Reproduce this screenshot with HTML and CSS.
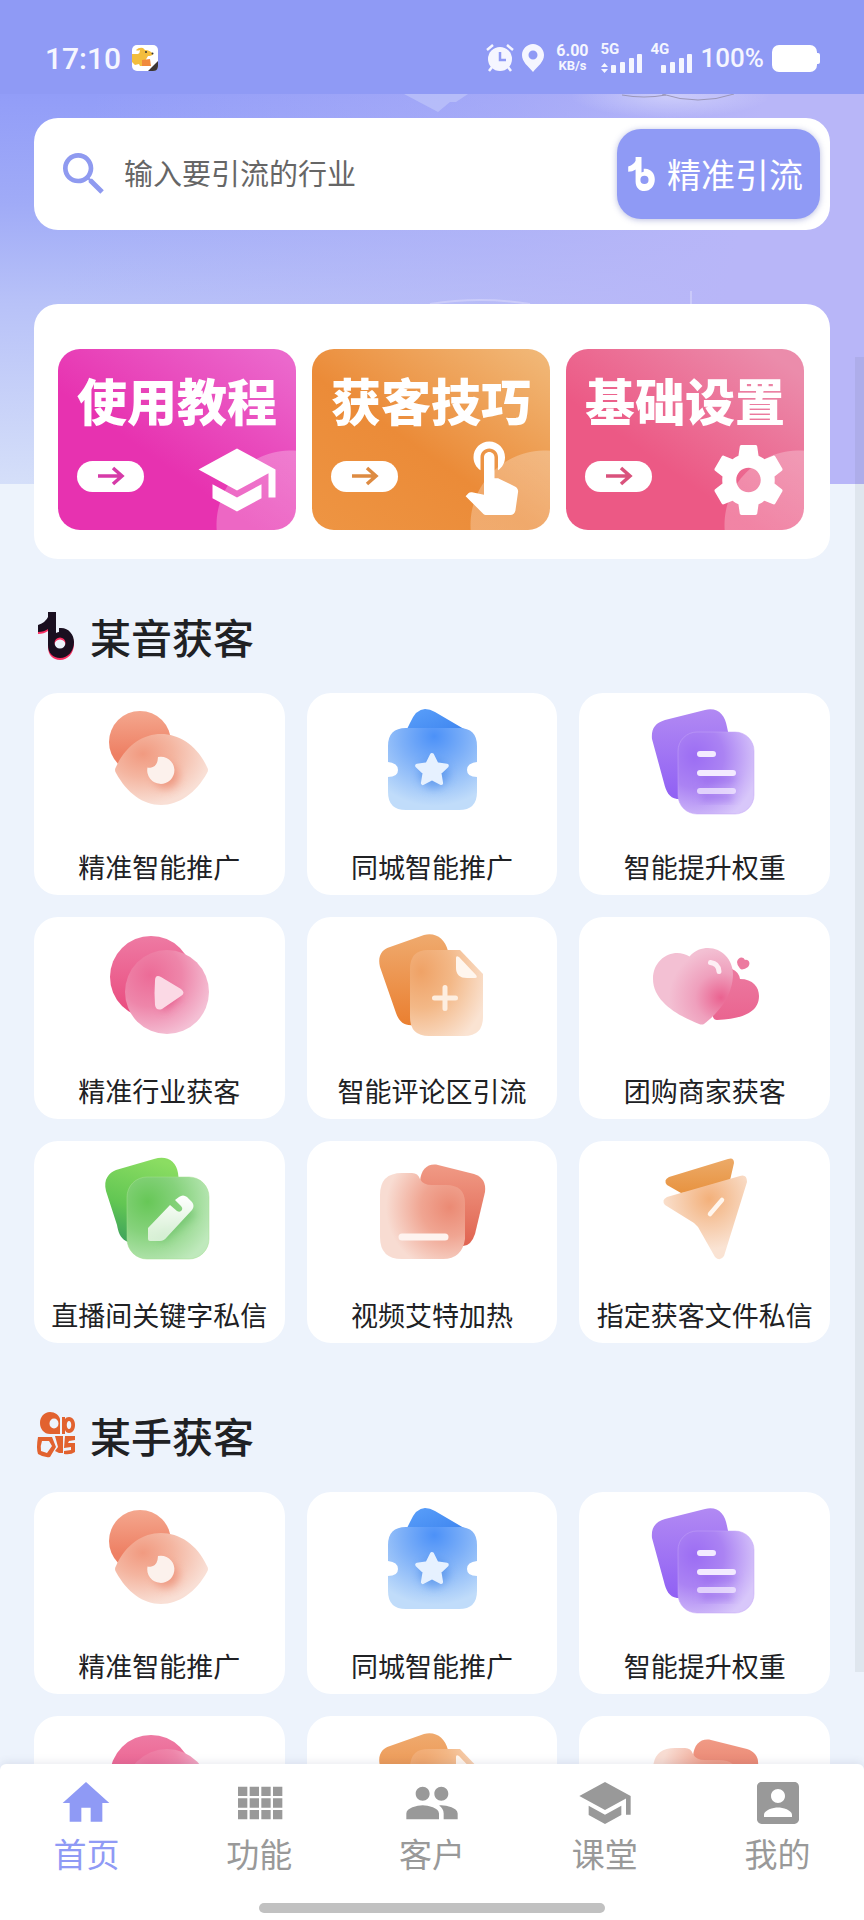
FILE: index.html
```html
<!DOCTYPE html>
<html lang="zh-CN">
<head>
<meta charset="utf-8">
<meta name="viewport" content="width=device-width, initial-scale=1">
<title>首页</title>
<link rel="stylesheet" href="styles.css">
</head>
<body>
<svg class="sprite" aria-hidden="true">
  <defs>
    <linearGradient id="coralBack" x1="0" y1="0" x2="0" y2="1"><stop offset="0" stop-color="#f4a78e"/><stop offset=".7" stop-color="#ee8064"/></linearGradient>
    <radialGradient id="coralFront" cx=".3" cy=".28" r=".72"><stop offset="0" stop-color="#f19a80"/><stop offset=".45" stop-color="#f4b5a0"/><stop offset="1" stop-color="#f9dfd5"/></radialGradient>
    <linearGradient id="blueBack" x1="0" y1="0" x2="1" y2="1"><stop offset="0" stop-color="#5ba0fa"/><stop offset="1" stop-color="#3b82ee"/></linearGradient>
    <radialGradient id="blueFront" cx=".52" cy=".1" r=".85"><stop offset="0" stop-color="#4c91f8"/><stop offset=".45" stop-color="#7fb1f8"/><stop offset="1" stop-color="#c0dcfa"/></radialGradient>
    <linearGradient id="purpleBack" x1="0" y1="0" x2="0" y2="1"><stop offset="0" stop-color="#b189f3"/><stop offset="1" stop-color="#9060f4"/></linearGradient>
    <radialGradient id="purpleFront" cx=".22" cy=".3" r=".85"><stop offset="0" stop-color="#9c6df3"/><stop offset=".45" stop-color="#ab83f3"/><stop offset="1" stop-color="#d8c7fa"/></radialGradient>
    <linearGradient id="pinkBack" x1="0" y1="0" x2="0" y2="1"><stop offset="0" stop-color="#ee7aa3"/><stop offset="1" stop-color="#e9487c"/></linearGradient>
    <linearGradient id="heartBack" x1="0" y1="0" x2="0" y2="1"><stop offset="0" stop-color="#ec7aa0"/><stop offset="1" stop-color="#ea6490"/></linearGradient>
    <radialGradient id="pinkFront" cx=".3" cy=".3" r=".75"><stop offset="0" stop-color="#ec6b97"/><stop offset=".5" stop-color="#ee86aa"/><stop offset="1" stop-color="#f4bfd4"/></radialGradient>
    <linearGradient id="orangeBack" x1="0" y1="0" x2="0" y2="1"><stop offset="0" stop-color="#efaa6e"/><stop offset="1" stop-color="#ea7f30"/></linearGradient>
    <linearGradient id="planeBack" x1="0" y1="0" x2="0" y2="1"><stop offset="0" stop-color="#ecaa68"/><stop offset="1" stop-color="#e89340"/></linearGradient>
    <radialGradient id="orangeFront" cx=".15" cy=".25" r=".95"><stop offset="0" stop-color="#efa266"/><stop offset=".45" stop-color="#f3b887"/><stop offset="1" stop-color="#fae3d2"/></radialGradient>
    <linearGradient id="greenBack" x1=".6" y1="0" x2=".3" y2="1"><stop offset="0" stop-color="#8bdd62"/><stop offset=".6" stop-color="#62c653"/><stop offset="1" stop-color="#3ea35c"/></linearGradient>
    <radialGradient id="greenFront" cx=".25" cy=".3" r=".85"><stop offset="0" stop-color="#67c757"/><stop offset=".45" stop-color="#86d27c"/><stop offset="1" stop-color="#bfe9bc"/></radialGradient>
    <linearGradient id="redBack" x1="0" y1="0" x2="0" y2="1"><stop offset="0" stop-color="#f09a85"/><stop offset="1" stop-color="#e06350"/></linearGradient>
    <radialGradient id="redFront" cx=".82" cy=".4" r=".75"><stop offset="0" stop-color="#eb8a74"/><stop offset=".45" stop-color="#f0a592"/><stop offset="1" stop-color="#f8dcd2"/></radialGradient>
    <radialGradient id="heartFront" cx=".85" cy=".65" r=".65"><stop offset="0" stop-color="#ea6290"/><stop offset=".5" stop-color="#efa0bd"/><stop offset="1" stop-color="#f3c0d3"/></radialGradient>
    <radialGradient id="planeFront" cx=".55" cy=".28" r=".6"><stop offset="0" stop-color="#f3b07a"/><stop offset=".5" stop-color="#f6caa8"/><stop offset="1" stop-color="#fae3d3"/></radialGradient>
    <linearGradient id="gloss" x1="0" y1="0" x2="0" y2="1"><stop offset="0" stop-color="#fff"/><stop offset="1" stop-color="#fff" stop-opacity=".65"/></linearGradient>
    <filter id="soft" x="-40%" y="-40%" width="180%" height="180%"><feGaussianBlur stdDeviation="4"/></filter>
  </defs>

  <symbol id="i-eye" viewBox="0 0 120 120">
    <circle cx="41" cy="41" r="31" fill="url(#coralBack)"/>
    <path d="M17 66C27 44 44 33 62 33s36 11 46 33q2 3 0 6c-11 20-28 32-46 32S28 92 17 72q-2-3 0-6z" fill="url(#coralFront)"/>
    <circle cx="67" cy="75" r="13" fill="#ea7f63" opacity=".6" filter="url(#soft)"/>
    <path d="M59 56a13.600 13.600 0 1 1-10.500 10.500q1.500.5 3 .2Q57 66 58.500 60q.3-2 .5-4z" fill="#fcf1ec"/>
  </symbol>
  <symbol id="i-ticket" viewBox="0 0 120 120">
    <path d="M33 32l5-10Q44 8 53 8q5 0 10 3l29 17v8z" fill="url(#blueBack)"/>
    <path d="M34 27h53q18 0 18 18v16q-10 1-10 8t10 7v15q0 18-18 18H34q-18 0-18-18V76q10 0 10-7t-10-8V45q0-18 18-18z" fill="url(#blueFront)"/>
    <circle cx="62" cy="73" r="15" fill="#3f83e6" opacity=".5" filter="url(#soft)"/>
    <path d="M60 54l4.600 9.200 10.200 1.500-7.400 7.200 1.700 10.200-9.100-4.800-9.100 4.800 1.700-10.200-7.400-7.200 10.200-1.500z" fill="#e6f1ff" stroke="#e6f1ff" stroke-width="4" stroke-linejoin="round"/>
  </symbol>
  <symbol id="i-list" viewBox="0 0 120 120">
    <path d="M7 38c-1-10 3-16 13-19L60 9c13-3 20 5 22 17l3 14-46 58h-7c-8-1-11-8-13-16z" fill="url(#purpleBack)"/>
    <rect x="33" y="31" width="76" height="82" rx="19" fill="url(#purpleFront)" stroke="#c3a3f8" stroke-opacity=".5"/>
    <path d="M56 78h34M56 96h32" stroke="#8d5ce8" stroke-width="8" opacity=".5" filter="url(#soft)"/>
    <g fill="none" stroke="#f3ebff" stroke-width="6" stroke-linecap="round"><path d="M55 53h13M55 72h33"/><path d="M55 90h33" opacity=".75"/></g>
  </symbol>
  <symbol id="i-play" viewBox="0 0 120 120">
    <circle cx="52" cy="52" r="41" fill="url(#pinkBack)"/>
    <circle cx="68" cy="67" r="42" fill="url(#pinkFront)"/>
    <path d="M60 62l24 8-20 18z" fill="#e2447b" opacity=".6" filter="url(#soft)"/>
    <path d="M56 56q0-7 6-4l20 12q5 4 0 7L63 84q-6 2-7-4-1-12 0-24z" fill="#fbd9e5"/>
  </symbol>
  <symbol id="i-doc" viewBox="0 0 120 120">
    <path d="M8 42C5 30 11 24 18 22l34-12c12-3 21 4 24 16l2 30-36 44c-11 1-15-4-18-12z" fill="url(#orangeBack)"/>
    <path d="M56 25h32l23 24v43q0 19-19 19H57q-19 0-19-19V44q0-19 18-19z" fill="url(#orangeFront)"/>
    <path d="M84 33q0-3 3-1l17 18q2 3-1 3h-8q-11 0-11-10z" fill="#fff6ee"/>
    <path d="M64 79h22" stroke="#ea8a42" stroke-width="12" opacity=".6" filter="url(#soft)"/>
    <path d="M73 62.500v21M62.500 73h21" stroke="#fdeee0" stroke-width="5" stroke-linecap="round"/>
  </symbol>
  <symbol id="i-hearts" viewBox="0 0 120 120">
    <path d="M87 44q7 3 8 10c13 0 19 8 19 17 0 17-18 23-42 24q-3 0-4-3L60 60z" fill="url(#heartBack)"/>
    <path d="M44.500 31.500C50 25 57 23 63 23c14 0 25 12 25 26 0 23-17 41-29 50q-2 1-5 0C34 91 8 77 8 54c0-22 22-32 36.500-22.500z" fill="url(#heartFront)"/>
    <path d="M65.500 37.500q8 1 8.500 9" fill="none" stroke="#fdeef4" stroke-width="5" stroke-linecap="round"/>
    <path d="M92 37c1-5 6-6 8-2 4-1 6 4 3 7q-3 2-6 2.500-1 0-2-1-3-3-3-6.500z" fill="#ec7a9f"/>
  </symbol>
  <symbol id="i-pencil" viewBox="0 0 120 120">
    <path d="M7 42C4 30 10 24 17 21l38-11c13-4 22 2 24 14l3 26-46 44q-6 0-9-2c-6-3-8-10-9-16z" fill="url(#greenBack)"/>
    <rect x="28" y="28" width="82" height="82" rx="20" fill="url(#greenFront)" stroke="#a5e092" stroke-opacity=".5"/>
    <path d="M60 90l34-28" stroke="#52b254" stroke-width="10" opacity=".45" filter="url(#soft)"/>
    <path d="M49 79l22-23 7 6q3 2 5-1 1-2-1-4l-6-6 4-3q4-3 8 0l5 5q3 4 0 8L68 88q-3 4-7 4H51q-2 0-2-2z" fill="url(#gloss)"/>
  </symbol>
  <symbol id="i-folder" viewBox="0 0 120 120">
    <path d="M48 32C49 20 56 14 66 16l36 9c9 3 12 9 11 18l-10 42q-4 12-12 12L56 60z" fill="url(#redBack)"/>
    <path d="M30 24h10q6 0 8 6 3 6 12 6h14q19 0 19 18v36q-3 20-22 20H30Q8 110 8 88V46q0-22 22-22z" fill="url(#redFront)"/>
    <path d="M32 94h44" stroke="#e5705b" stroke-width="8" opacity=".55" filter="url(#soft)"/>
    <path d="M30 88h43" stroke="#fef3ef" stroke-width="7" stroke-linecap="round"/>
  </symbol>
  <symbol id="i-plane" viewBox="0 0 120 120">
    <path d="M24 28L83 10q6-2 6 4l-6 26-47 4-14-8q-4-5 2-8z" fill="url(#planeBack)"/>
    <path d="M22 48l73-21q7-2 7 6L79 107q-4 6-9 1L53 78Q51 76 49 74L20 56q-4-5 2-8z" fill="url(#planeFront)"/>
    <path d="M77 51L65 65" stroke="#fff6ee" stroke-width="4.500" stroke-linecap="round"/>
  </symbol>
  <symbol id="i-note" viewBox="0 0 36 46">
    <path fill-rule="evenodd" d="M10 0h8v21q2-1 3-1v-4h2c8 0 13 7 13 14 0 9-6 16-14 16-7 0-12-5-12-13V17q-4 3-10 3v-7q8-3 10-8zm12 25.500a5.500 5.500 0 1 0 0 11 5.500 5.500 0 0 0 0-11z"/>
  </symbol>
  <symbol id="i-school" viewBox="0 0 24 24"><path d="M5 13.180v4L12 21l7-3.820v-4L12 17l-7-3.820zM12 3L1 9l11 6 9-4.910V17h2V9L12 3z"/></symbol>
  <symbol id="i-arrow" viewBox="0 0 28 20"><path d="M1 10h23M16 2l9 8-9 8" fill="none" stroke="currentColor" stroke-width="3.500"/></symbol>
</svg>

<div class="app">
  <header class="status">
    <div class="status-group">
      <span class="clock">17:10</span>
      <svg class="ic-dog" viewBox="0 0 26 26" aria-hidden="true">
        <rect width="26" height="26" rx="5" fill="#fff"/>
        <path d="M0 9h6q2-1 2-4-3 1-4 0 3-3 7-2l2 2q5 0 8 4-1 2-5 2l-3 5 2 5H8l-1-2-4 1-3-3z" fill="#f3bd3d"/>
        <circle cx="14" cy="7" r="1" fill="#333"/><circle cx="20.500" cy="8.500" r="1" fill="#333"/>
        <path d="M10 15l8-1 1 7h-9z" fill="#f08a3c"/>
        <path d="M26 16L16 26h5q5 0 5-5z" fill="#3c3533"/>
      </svg>
    </div>
    <div class="status-group status-right">
      <svg class="ic-alarm" viewBox="0 0 28 28" aria-hidden="true"><circle cx="14" cy="15" r="12"/><path d="M1 6l6-5M27 6l-6-5M6 23l-3 4M22 23l3 4" stroke="#f5f6ff" stroke-width="2.500"/><path d="M14 8v8h6" fill="none" stroke="#8f9af5" stroke-width="2.500"/></svg>
      <svg class="ic-pin" viewBox="0 0 22 28" aria-hidden="true"><path fill-rule="evenodd" d="M11 0c6 0 11 5 11 11 0 7-6 11-11 17C6 22 0 18 0 11 0 5 5 0 11 0zm0 6.500a4.500 4.500 0 1 0 0 9 4.500 4.500 0 0 0 0-9z"/></svg>
      <span class="speed"><span>6.00</span><small>KB/s</small></span>
      <span class="signal"><span>5G</span>
        <svg viewBox="0 0 42 19" aria-hidden="true"><path d="M0 13l3.500-4 3.500 4zM0 15l3.500 4 3.500-4z"/><rect x="10" y="11" width="5" height="8" rx="1"/><rect x="19" y="8" width="5" height="11" rx="1"/><rect x="28" y="4" width="5" height="15" rx="1"/><rect x="36" y="0" width="5" height="19" rx="1"/></svg></span>
      <span class="signal"><span>4G</span>
        <svg viewBox="0 0 42 19" aria-hidden="true"><rect x="10" y="11" width="5" height="8" rx="1"/><rect x="19" y="8" width="5" height="11" rx="1"/><rect x="28" y="4" width="5" height="15" rx="1"/><rect x="36" y="0" width="5" height="19" rx="1"/></svg></span>
      <span class="percent">100%</span>
      <svg class="ic-battery" viewBox="0 0 48 27" aria-hidden="true"><rect width="45" height="27" rx="7"/><rect x="42" y="8" width="6" height="11" rx="2"/></svg>
    </div>
  </header>

  <main class="content">
    <svg class="decor" viewBox="0 0 864 390" preserveAspectRatio="none" aria-hidden="true">
      <defs><radialGradient id="glow"><stop offset="0" stop-color="#fff" stop-opacity=".35"/><stop offset="1" stop-color="#fff" stop-opacity="0"/></radialGradient></defs>
      <ellipse cx="670" cy="2" rx="100" ry="22" fill="url(#glow)"/>
      <path d="M404 0l34 18 12-10 6 0 12-8z" fill="#c3c9fa" opacity=".6"/>
      <path d="M622 1q22 4 44 0M662 0q36 12 72 0" fill="none" stroke="#9a96b8"/>
      <path d="M430 210q50-8 100 0" fill="none" stroke="#d3d3fb" stroke-width="2" opacity=".7"/>
      <path d="M691 197v14" stroke="#dcdcfb"/>
    </svg>

    <form class="search">
      <svg class="ic-search" viewBox="0 0 24 24" aria-hidden="true"><path d="M15.500 14h-.79l-.28-.27C15.410 12.590 16 11.110 16 9.500 16 5.910 13.090 3 9.500 3S3 5.910 3 9.500 5.910 16 9.500 16c1.610 0 3.090-.59 4.230-1.570l.27.280v.79l5 4.990L20.490 19l-4.990-5zm-6 0C7.010 14 5 11.990 5 9.500S7.010 5 9.500 5 14 7.010 14 9.500 11.990 14 9.500 14z"/></svg>
      <input class="search-input" type="text" placeholder="输入要引流的行业" aria-label="输入要引流的行业">
      <button class="search-btn" type="button"><svg aria-hidden="true"><use href="#i-note"/></svg>精准引流</button>
    </form>

    <section class="banners">
      <a class="banner magenta" href="#"><span class="banner-title">使用教程</span>
        <span class="banner-row"><span class="pill"><svg aria-hidden="true"><use href="#i-arrow"/></svg></span><svg class="banner-ic" aria-hidden="true"><use href="#i-school"/></svg></span></a>
      <a class="banner orange" href="#"><span class="banner-title">获客技巧</span>
        <span class="banner-row"><span class="pill"><svg aria-hidden="true"><use href="#i-arrow"/></svg></span><svg class="banner-ic" viewBox="0 2 24 24" aria-hidden="true"><path d="M9 11.240V7.500C9 6.120 10.120 5 11.500 5S14 6.120 14 7.500v3.740c1.210-.81 2-2.180 2-3.740C16 5.010 13.990 3 11.500 3S7 5.010 7 7.500c0 1.560.79 2.930 2 3.740zm9.840 4.630l-4.540-2.260c-.17-.07-.35-.11-.54-.11H13v-6c0-.83-.67-1.500-1.500-1.500S10 6.670 10 7.500v10.740l-3.430-.72c-.08-.01-.15-.03-.24-.03-.31 0-.59.130-.79.330l-.79.800 4.940 4.940c.27.270.65.440 1.060.440h6.790c.75 0 1.330-.55 1.440-1.280l.75-5.270c.01-.07.02-.14.02-.2 0-.62-.38-1.160-.91-1.380z"/></svg></span></a>
      <a class="banner rose" href="#"><span class="banner-title">基础设置</span>
        <span class="banner-row"><span class="pill"><svg aria-hidden="true"><use href="#i-arrow"/></svg></span><svg class="banner-ic" viewBox="-1 0 24 24" aria-hidden="true"><path d="M19.430 12.980c.04-.32.07-.64.07-.98s-.03-.66-.07-.98l2.110-1.650c.19-.15.24-.42.12-.64l-2-3.460c-.12-.22-.39-.3-.61-.22l-2.490 1c-.52-.4-1.080-.73-1.690-.98l-.38-2.650C14.460 2.180 14.250 2 14 2h-4c-.25 0-.46.180-.49.420l-.38 2.650c-.61.250-1.170.590-1.690.980l-2.490-1c-.23-.09-.49 0-.61.220l-2 3.460c-.13.220-.07.490.12.640l2.110 1.650c-.04.320-.07.650-.07.980s.03.660.07.980l-2.110 1.650c-.19.150-.24.420-.12.640l2 3.460c.12.220.39.300.61.220l2.490-1c.52.400 1.080.730 1.690.980l.38 2.650c.03.240.24.420.49.420h4c.25 0 .46-.18.49-.42l.38-2.650c.61-.25 1.170-.59 1.690-.98l2.490 1c.23.090.49 0 .61-.22l2-3.460c.12-.22.07-.49-.12-.64l-2.110-1.650zM12 15.500c-1.930 0-3.500-1.570-3.500-3.500s1.570-3.500 3.500-3.500 3.500 1.570 3.500 3.500-1.570 3.500-3.500 3.500z"/></svg></span></a>
    </section>

    <section class="group">
      <h2 class="group-title">
        <svg viewBox="-2 -2 40 50" aria-hidden="true"><use href="#i-note" x="0" y="1" width="36" height="46" fill="#fb2f63"/><use href="#i-note" x="0" y="-1" width="36" height="46" fill="#1a0f20"/></svg>某音获客</h2>
      <div class="grid">
        <a class="card" href="#"><svg aria-hidden="true"><use href="#i-eye"/></svg><span>精准智能推广</span></a>
        <a class="card" href="#"><svg aria-hidden="true"><use href="#i-ticket"/></svg><span>同城智能推广</span></a>
        <a class="card" href="#"><svg aria-hidden="true"><use href="#i-list"/></svg><span>智能提升权重</span></a>
        <a class="card" href="#"><svg aria-hidden="true"><use href="#i-play"/></svg><span>精准行业获客</span></a>
        <a class="card" href="#"><svg aria-hidden="true"><use href="#i-doc"/></svg><span>智能评论区引流</span></a>
        <a class="card" href="#"><svg aria-hidden="true"><use href="#i-hearts"/></svg><span>团购商家获客</span></a>
        <a class="card" href="#"><svg aria-hidden="true"><use href="#i-pencil"/></svg><span>直播间关键字私信</span></a>
        <a class="card" href="#"><svg aria-hidden="true"><use href="#i-folder"/></svg><span>视频艾特加热</span></a>
        <a class="card" href="#"><svg aria-hidden="true"><use href="#i-plane"/></svg><span>指定获客文件私信</span></a>
      </div>
    </section>

    <section class="group">
      <h2 class="group-title">
        <svg viewBox="0 0 40 50" aria-hidden="true"><g fill="#e2622f" fill-rule="evenodd"><path d="M14 2c5 0 9 3 10 7v15H14C8 24 4 19 4 13S8 2 14 2zm4 6.500a4.500 5 0 1 0 0 10 4.500 5 0 0 0 0-10z"/><path d="M26 7h3v17h-3z"/><path d="M33 7c4 0 6 4 6 8s-2 8-6 8q-3 0-4-3V9q1-2 4-2zm0 4c-3 0-3 8 0 8s3-8 0-8z"/><path d="M2 27h14l4 10-6 10q-6 1-12-3-2-6 0-17zm4 4q-2 5-1 10l6 2 5-7-3-5z"/><path d="M19 26h8v17h-4l-4-2 3-4z"/><path d="M29 26h10v4l-6 1-1 2h7v9q-4 3-11 2v-3l7-1v-3l-7 1z"/></g></svg>某手获客</h2>
      <div class="grid">
        <a class="card" href="#"><svg aria-hidden="true"><use href="#i-eye"/></svg><span>精准智能推广</span></a>
        <a class="card" href="#"><svg aria-hidden="true"><use href="#i-ticket"/></svg><span>同城智能推广</span></a>
        <a class="card" href="#"><svg aria-hidden="true"><use href="#i-list"/></svg><span>智能提升权重</span></a>
        <a class="card" href="#" aria-label="精准行业获客"><svg aria-hidden="true"><use href="#i-play"/></svg></a>
        <a class="card" href="#" aria-label="智能评论区引流"><svg aria-hidden="true"><use href="#i-doc"/></svg></a>
        <a class="card" href="#" aria-label="视频艾特加热"><svg aria-hidden="true"><use href="#i-folder"/></svg></a>
      </div>
    </section>
    <div class="scrollbar"></div>
  </main>

  <footer class="tabbar">
    <nav class="tabs">
      <a class="tab active" href="#"><svg viewBox="0 0 24 24" aria-hidden="true"><path d="M10 20v-6h4v6h5v-8h3L12 3 2 12h3v8z"/></svg>首页</a>
      <a class="tab" href="#"><svg viewBox="0 0 24 24" aria-hidden="true"><path d="M3 5h4v4H3zM8 5h4v4H8zM13 5h4v4h-4zM18 5h4v4h-4zM3 10h4v4H3zM8 10h4v4H8zM13 10h4v4h-4zM18 10h4v4h-4zM3 15h4v4H3zM8 15h4v4H8zM13 15h4v4h-4zM18 15h4v4h-4z"/></svg>功能</a>
      <a class="tab" href="#"><svg viewBox="0 0 24 24" aria-hidden="true"><path d="M16 11c1.660 0 2.990-1.340 2.990-3S17.660 5 16 5s-3 1.340-3 3 1.340 3 3 3zm-8 0c1.660 0 2.990-1.340 2.990-3S9.660 5 8 5 5 6.340 5 8s1.340 3 3 3zm0 2c-2.330 0-7 1.170-7 3.500V19h14v-2.500c0-2.330-4.670-3.500-7-3.500zm8 0c-.29 0-.62.020-.97.050 1.160.840 1.970 1.970 1.970 3.450V19h6v-2.500c0-2.330-4.670-3.500-7-3.500z"/></svg>客户</a>
      <a class="tab" href="#"><svg aria-hidden="true"><use href="#i-school"/></svg>课堂</a>
      <a class="tab" href="#"><svg viewBox="0 0 24 24" aria-hidden="true"><path d="M3 5v14c0 1.100.89 2 2 2h14c1.100 0 2-.9 2-2V5c0-1.100-.9-2-2-2H5c-1.110 0-2 .9-2 2zm12 4c0 1.660-1.340 3-3 3s-3-1.340-3-3 1.340-3 3-3 3 1.340 3 3zm-9 8c0-2 4-3.100 6-3.100s6 1.100 6 3.100v1H6v-1z"/></svg>我的</a>
    </nav>
    <div class="home-indicator"></div>
  </footer>
</div>
</body>
</html>
```

FILE: styles.css
```css
* { box-sizing: border-box; }
body {
  margin: 0;
  background: #edf3fc;
  color: #202124;
  font-family: "Noto Sans CJK SC", "Noto Sans", sans-serif;
}
a { color: inherit; text-decoration: none; }
.sprite { position: absolute; width: 0; height: 0; }
.app { display: flex; flex-direction: column; height: 100vh; overflow: hidden; }

/* Status bar */
.status {
  display: flex;
  flex: none;
  justify-content: space-between;
  align-items: center;
  padding: 36px 44px 14px 45px;
  height: 94px;
  background: #8f9af5;
  color: #f5f6ff;
  fill: #f5f6ff;
  font-family: Roboto, sans-serif;
}
.status-group { display: flex; align-items: center; gap: 11px; }
.status-right { gap: 8px; }
.clock { font-size: 30px; font-weight: 500; }
.ic-dog { width: 26px; height: 26px; }
.ic-alarm { width: 28px; height: 28px; }
.ic-pin { width: 22px; height: 28px; }
.speed { display: flex; flex-direction: column; align-items: center; padding: 0 4px; font-size: 16px; font-weight: 700; line-height: 16px; }
.speed small { font-size: 13px; line-height: 14px; }
.signal { display: flex; flex-direction: column; width: 42px; font-size: 15px; font-weight: 700; line-height: 10px; }
.signal svg { width: 42px; height: 19px; }
.percent { font-size: 26px; font-weight: 500; }
.ic-battery { width: 48px; height: 27px; fill: #fff; }

/* Scrolling content */
.content {
  position: relative;
  flex: 1;
  min-height: 0;
  overflow: hidden;
  padding: 24px 34px 0;
  background:
    linear-gradient(100deg, rgba(183, 181, 247, 0) 10%, rgba(183, 181, 247, .5) 55%, #b8b6f8 82%) top / 100% 390px no-repeat,
    linear-gradient(#929df8 0, #a0abf7 110px, #b8c2f8 210px, #d5dff9 390px) top / 100% 390px no-repeat,
    #edf3fc;
}
.decor { position: absolute; top: 0; left: 0; width: 100%; height: 390px; }
.search {
  position: relative;
  display: flex;
  align-items: center;
  gap: 12px;
  height: 112px;
  padding: 0 10px 0 22px;
  border-radius: 24px;
  background: #fff;
}
.ic-search { flex: none; width: 56px; height: 56px; fill: #8f9af0; }
.search-input {
  flex: 1;
  min-width: 0;
  padding: 0 0 4px;
  border: 0;
  outline: 0;
  background: none;
  color: #333;
  font: 29px/40px "Noto Sans CJK SC", sans-serif;
}
.search-input::placeholder { color: #666; opacity: 1; }
.search-btn {
  display: flex;
  align-items: center;
  gap: 12px;
  height: 90px;
  padding: 0 17px 0 11px;
  border: 0;
  border-radius: 24px;
  background: #8f9af5;
  box-shadow: 0 1px 6px rgba(80, 90, 180, .4);
  color: #fff;
  font: 34px/40px "Noto Sans CJK SC", sans-serif;
}
.search-btn svg { width: 27px; height: 34px; fill: #fff; }

.banners {
  position: relative;
  display: grid;
  grid-template-columns: repeat(3, 1fr);
  gap: 16px;
  margin-top: 74px;
  padding: 45px 26px 29px 24px;
  border-radius: 24px;
  background: #fff;
}
.banner {
  display: flex;
  flex-direction: column;
  justify-content: space-between;
  height: 181px;
  padding: 22px 17px 8px 19px;
  border-radius: 22px;
  color: #fff;
}
.magenta { background: radial-gradient(circle at calc(100% - 5px) calc(100% - 5px), rgba(255, 255, 255, .26) 74px, transparent 75px), linear-gradient(215deg, #eb68cc 5%, #e732b0 60%); }
.orange { background: radial-gradient(circle at calc(100% - 5px) calc(100% - 5px), rgba(255, 255, 255, .26) 74px, transparent 75px), linear-gradient(215deg, #f1b878 2%, #eb8b38 55%, #ee9543); }
.rose { background: radial-gradient(circle at calc(100% - 5px) calc(100% - 5px), rgba(255, 255, 255, .26) 74px, transparent 75px), linear-gradient(215deg, #eb8cab 8%, #ec5985 62%); }
.banner-title { font-size: 50px; font-weight: 900; line-height: 56px; white-space: nowrap; }
.banner-row { display: flex; justify-content: space-between; align-items: center; }
.banner-ic { width: 84px; height: 84px; fill: #fff; }
.pill { display: flex; justify-content: center; align-items: center; width: 67px; height: 31px; margin-bottom: 8px; border-radius: 16px; background: #fff; }
.pill svg { width: 28px; height: 20px; }
.magenta .pill { color: #d63aa8; }
.orange .pill { color: #dd8b42; }
.rose .pill { color: #d9527c; }

/* Feature groups */
.group { position: relative; margin-top: 49px; }
.group + .group { margin-top: 64px; }
.group-title { display: flex; align-items: center; gap: 14px; height: 56px; margin: 0 0 29px; padding-left: 2px; color: #202124; font-size: 41px; font-weight: 500; line-height: 56px; }
.group-title svg { width: 40px; height: 50px; }
.grid { display: grid; grid-template-columns: repeat(3, 1fr); gap: 22px; }
.card {
  display: flex;
  flex-direction: column;
  justify-content: space-between;
  align-items: center;
  height: 202px;
  padding: 8px 0;
  border-radius: 24px;
  background: #fff;
  font-size: 27px;
  line-height: 40px;
  white-space: nowrap;
}
.card svg { width: 120px; height: 120px; }
.scrollbar { position: absolute; top: 263px; right: 0; width: 9px; bottom: 92px; background: rgba(60, 80, 80, .08); }

/* Bottom tabs */
.tabbar {
  position: relative;
  display: flex;
  flex: none;
  flex-direction: column;
  justify-content: space-between;
  align-items: center;
  height: 156px;
  padding: 11px 0 7px;
  border-radius: 6px 6px 0 0;
  background: #fff;
  box-shadow: 0 -2px 8px rgba(60, 70, 110, .1);
}
.tabs { display: grid; grid-template-columns: repeat(5, 1fr); width: 100%; }
.tab { display: flex; flex-direction: column; align-items: center; gap: 2px; color: #999; fill: #999; font-size: 33px; line-height: 40px; }
.tab svg { width: 56px; height: 56px; }
.active { color: #8f9af5; fill: #8f9af5; }
.home-indicator { width: 40%; height: 10px; border-radius: 5px; background: #c1c1c1; }
```
